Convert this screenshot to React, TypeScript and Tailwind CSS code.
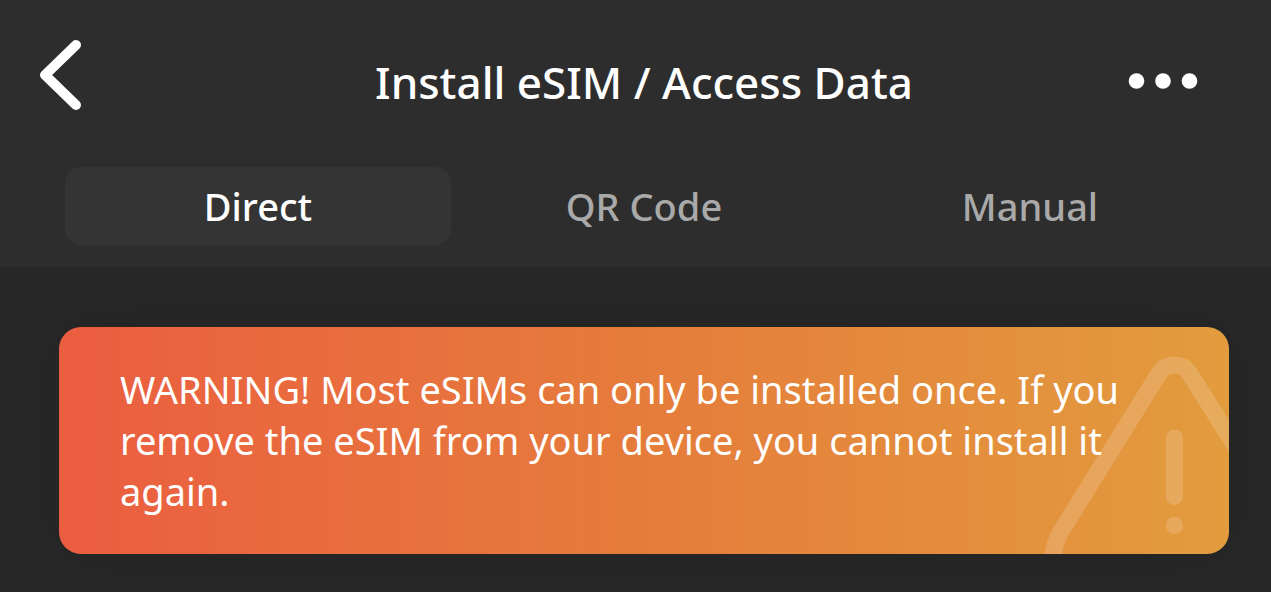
import { useState } from "react";

const tabs = ["Direct", "QR Code", "Manual"];

function BackIcon() {
  return (
    <svg width="42" height="70" viewBox="0 0 42 70" fill="none" aria-hidden="true">
      <path
        d="M36 5 L5 35 L36 65"
        stroke="currentColor"
        strokeWidth="10"
        strokeLinecap="round"
        strokeLinejoin="round"
      />
    </svg>
  );
}

function MoreIcon() {
  return (
    <svg width="70" height="16" viewBox="0 0 70 16" fill="currentColor" aria-hidden="true">
      <circle cx="8.5" cy="8" r="7.8" />
      <circle cx="35" cy="8" r="7.8" />
      <circle cx="61.5" cy="8" r="7.8" />
    </svg>
  );
}

// Oversized triangle, clipped by the card's right and bottom edges
function WarningMark() {
  return (
    <svg
      className="absolute right-0 bottom-0"
      width="189"
      height="227"
      viewBox="0 0 189 227"
      fill="none"
      aria-hidden="true"
    >
      <g stroke="#ffffff" strokeOpacity="0.16" strokeWidth="17" strokeLinecap="round">
        <path d="M12 242 C12 230 13 219 20 206 L119.1 46.3 A18 18 0 0 1 149.5 46.3 L230 174" />
        <path d="M134.5 111 V169.5" />
      </g>
      <circle cx="134.5" cy="198.5" r="8.5" fill="#ffffff" fillOpacity="0.16" />
    </svg>
  );
}

export default function App() {
  const [active, setActive] = useState("Direct");

  return (
    <div className="flex min-h-screen flex-col bg-[#272727] font-['Noto_Sans',sans-serif] text-white">
      <header className="relative bg-[#2d2d2d] pb-[22px]">
        <div className="flex items-start justify-between pt-10 pr-[73px] pl-10">
          <button type="button" aria-label="Back" className="w-[120px]">
            <BackIcon />
          </button>
          <h1 className="pt-2 text-[44px] leading-[68px] font-medium">
            Install eSIM / Access Data
          </h1>
          <button type="button" aria-label="More options" className="pt-[33px]">
            <MoreIcon />
          </button>
        </div>

        <div role="tablist" className="mt-[51px] grid grid-cols-3 pr-12 pl-[65px]">
          {tabs.map((tab) => (
            <button
              key={tab}
              type="button"
              role="tab"
              aria-selected={active === tab}
              onClick={() => setActive(tab)}
              className={`h-[78px] rounded-2xl text-[38px] font-medium ${
                active === tab ? "bg-[#343434] text-white" : "text-[#a9a9a9]"
              }`}
            >
              {tab}
            </button>
          ))}
        </div>
      </header>

      <main className="pt-[60px] pr-[42px] pl-[59px]">
        <div
          role="alert"
          className="relative overflow-hidden rounded-[22px] bg-linear-to-r from-[#eb5d40] via-[#e57c3b] to-[#e29c3e] py-[37px] pr-[90px] pl-[61px] shadow-[0_0_60px_#00000018]"
        >
          <WarningMark />
          <p className="relative text-[38px] leading-[51px]">
            WARNING! Most eSIMs can only be installed once. If you remove the
            eSIM from your device, you cannot install it again.
          </p>
        </div>
      </main>
    </div>
  );
}
